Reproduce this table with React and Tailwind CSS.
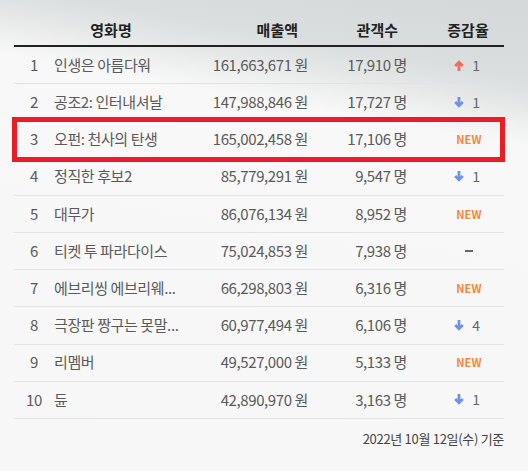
import React from 'react';

const movies = [
  { rank: 1, title: '인생은 아름다워', sales: '161,663,671', audience: '17,910', change: { type: 'up', value: 1 } },
  { rank: 2, title: '공조2: 인터내셔날', sales: '147,988,846', audience: '17,727', change: { type: 'down', value: 1 } },
  { rank: 3, title: '오펀: 천사의 탄생', sales: '165,002,458', audience: '17,106', change: { type: 'new' }, highlight: true },
  { rank: 4, title: '정직한 후보2', sales: '85,779,291', audience: '9,547', change: { type: 'down', value: 1 } },
  { rank: 5, title: '대무가', sales: '86,076,134', audience: '8,952', change: { type: 'new' } },
  { rank: 6, title: '티켓 투 파라다이스', sales: '75,024,853', audience: '7,938', change: { type: 'same' } },
  { rank: 7, title: '에브리씽 에브리웨...', sales: '66,298,803', audience: '6,316', change: { type: 'new' } },
  { rank: 8, title: '극장판 짱구는 못말...', sales: '60,977,494', audience: '6,106', change: { type: 'down', value: 4 } },
  { rank: 9, title: '리멤버', sales: '49,527,000', audience: '5,133', change: { type: 'new' } },
  { rank: 10, title: '듄', sales: '42,890,970', audience: '3,163', change: { type: 'down', value: 1 } },
];

const Arrow = ({ up }) => (
  <svg width="10" height="11" viewBox="0 0 10 11" className={up ? 'text-[#f26b5e]' : 'text-[#6f92e6]'}>
    <g transform={up ? '' : 'rotate(180 5 5.5)'} fill="none" stroke="currentColor" strokeWidth="2.8" strokeLinejoin="miter" strokeLinecap="butt">
      <path d="M5 11V2.5" />
      <path d="M1.2 6L5 2.2L8.8 6" />
    </g>
  </svg>
);

const Change = ({ change }) => {
  if (change.type === 'new') {
    return <span className="text-[11px] font-bold text-[#f5883b] tracking-[0.2px] pl-[4px]">NEW</span>;
  }
  if (change.type === 'same') {
    return <span className="block w-[8px] h-[2px] bg-[#666] ml-[4px]" />;
  }
  return (
    <span className="flex items-center gap-[8px]">
      <Arrow up={change.type === 'up'} />
      <span className="text-[14px] text-[#666]">{change.value}</span>
    </span>
  );
};

const gridCols = 'grid grid-cols-[40px_154px_110px_112px_74px]';

export default function App() {
  return (
    <div
      className="w-[528px] h-[471px] overflow-hidden bg-[linear-gradient(190deg,#d4d8d8_0%,#dadede_14%,#e6e8e8_19%,#f8f8f8_26%,#f7f7f7_100%)] text-[#5a5a5a]"
      style={{ fontFamily: '"Noto Sans CJK KR", "Noto Sans", sans-serif' }}
    >
      <div className="ml-[14px] w-[490px]">
        <div className={`${gridCols} h-[47px] pt-[15px] border-b-2 border-[#222] text-[15px] font-bold text-[#222] items-center`}>
          <div className="col-span-2 text-center">영화명</div>
          <div className="text-right pr-[20px]">매출액</div>
          <div className="text-right pr-[32px]">관객수</div>
          <div className="text-center pl-[2px]">증감율</div>
        </div>

        {movies.map((m) => (
          <div
            key={m.rank}
            className={`${gridCols} relative h-[37.2px] border-b border-[#e2e2e2] items-center text-[15px] tracking-[-0.4px]`}
          >
            {m.highlight && (
              <div className="absolute -left-[2px] -right-[1px] -top-[4px] -bottom-[4px] border-[5px] border-[#ed1c24] pointer-events-none" />
            )}
            <div className="text-center">{m.rank}</div>
            <div className="whitespace-nowrap">{m.title}</div>
            <div className="text-right pr-[10px] whitespace-nowrap">{m.sales} 원</div>
            <div className="text-right pr-[23px] whitespace-nowrap">{m.audience} 명</div>
            <div className="flex justify-center">
              <Change change={m.change} />
            </div>
          </div>
        ))}

        <p className="mt-[10px] text-right text-[13px] text-[#444] tracking-[-0.3px]">2022년 10월 12일(수) 기준</p>
      </div>
    </div>
  );
}
